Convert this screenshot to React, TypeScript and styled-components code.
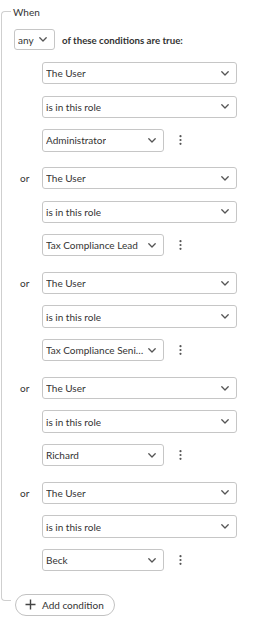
import { FC } from 'react';
import styled, { createGlobalStyle } from 'styled-components';

const GlobalStyle = createGlobalStyle`
  body {
    margin: 0;
    background: #ffffff;
    font-family: Lato, "Open Sans", sans-serif;
    color: #333333;
  }
`;

const Frame = styled.div`
  position: relative;
  width: 280px;
  padding-top: 5px;
  box-sizing: border-box;

  &::before {
    content: '';
    position: absolute;
    left: 1px;
    top: 11px;
    bottom: 15px;
    width: 9px;
    border: 1px solid #cfcfcf;
    border-right: none;
    border-radius: 4px 0 0 4px;
  }
`;

const Legend = styled.div`
  margin-left: 13px;
  font-size: 10px;
  line-height: 14px;
  color: #333333;
`;

const HeaderRow = styled.div`
  display: flex;
  align-items: center;
  margin-top: 10px;
  margin-left: 14px;
  gap: 7px;
`;

const HeaderText = styled.span`
  font-size: 9.7px;
  font-weight: 700;
  color: #333333;
`;

const Groups = styled.div`
  display: flex;
  flex-direction: column;
  gap: 15.4px;
  margin-top: 12px;
`;

const Group = styled.div`
  display: grid;
  grid-template-columns: 42px 195px;
  row-gap: 11.2px;
  align-items: center;
`;

const OrLabel = styled.span`
  padding-left: 20px;
  font-size: 10px;
  color: #333333;
`;

const Cell = styled.div`
  grid-column: 2;
  display: flex;
  align-items: center;
`;

const Box = styled.div<{ $width: number; $height?: number }>`
  display: flex;
  align-items: center;
  box-sizing: border-box;
  width: ${(p) => p.$width}px;
  height: ${(p) => p.$height ?? 22.4}px;
  padding: 0 7px 0 3px;
  border: 1px solid #c6c6c6;
  border-radius: 3px;
  background: #ffffff;
  font-size: 10px;
  color: #333333;
`;

const BoxText = styled.span`
  flex: 0 1 auto;
  min-width: 0;
  margin-right: 3px;
  white-space: nowrap;
  overflow: hidden;
  text-overflow: ellipsis;
`;

const Chevron = styled.svg`
  flex: none;
  width: 8px;
  height: 5px;
  margin-left: auto;
`;

const Kebab = styled.svg`
  flex: none;
  width: 3px;
  height: 10px;
  margin-left: 15px;
`;

const Footer = styled.div`
  margin-top: 22.7px;
  padding-left: 15px;
`;

const AddButton = styled.div`
  display: inline-flex;
  align-items: center;
  box-sizing: border-box;
  width: 100px;
  height: 22px;
  padding-left: 9px;
  gap: 6px;
  border: 1px solid #c2c2c2;
  border-radius: 11px;
  background: #ffffff;
  font-size: 10px;
  color: #333333;
`;

const Dropdown: FC<{ label: string; width: number; height?: number }> = ({ label, width, height }) => (
  <Box $width={width} $height={height}>
    <BoxText>{label}</BoxText>
    <Chevron viewBox="0 0 8 5">
      <path d="M0.8 0.8 L4 4 L7.2 0.8" fill="none" stroke="#555" strokeWidth="1.3" strokeLinecap="round" strokeLinejoin="round" />
    </Chevron>
  </Box>
);

const roles = ['Administrator', 'Tax Compliance Lead', 'Tax Compliance Senior Manager', 'Richard', 'Beck'];

export default function App() {
  return (
    <>
      <GlobalStyle />
      <Frame>
        <Legend>When</Legend>
        <HeaderRow>
          <Dropdown label="any" width={41} height={21} />
          <HeaderText>of these conditions are true:</HeaderText>
        </HeaderRow>
        <Groups>
          {roles.map((role, ix) => (
            <Group key={role}>
              <OrLabel>{ix > 0 ? 'or' : ''}</OrLabel>
              <Cell>
                <Dropdown label="The User" width={195} />
              </Cell>
              <Cell>
                <Dropdown label="is in this role" width={195} />
              </Cell>
              <Cell>
                <Dropdown label={role} width={122} />
                <Kebab viewBox="0 0 3 10">
                  <circle cx="1.5" cy="1.2" r="1.1" fill="#555" />
                  <circle cx="1.5" cy="5" r="1.1" fill="#555" />
                  <circle cx="1.5" cy="8.8" r="1.1" fill="#555" />
                </Kebab>
              </Cell>
            </Group>
          ))}
        </Groups>
        <Footer>
          <AddButton>
            <svg width="11" height="11" viewBox="0 0 11 11">
              <path d="M5.5 0.5 V10.5 M0.5 5.5 H10.5" stroke="#444" strokeWidth="1.4" />
            </svg>
            <span>Add condition</span>
          </AddButton>
        </Footer>
      </Frame>
    </>
  );
}
